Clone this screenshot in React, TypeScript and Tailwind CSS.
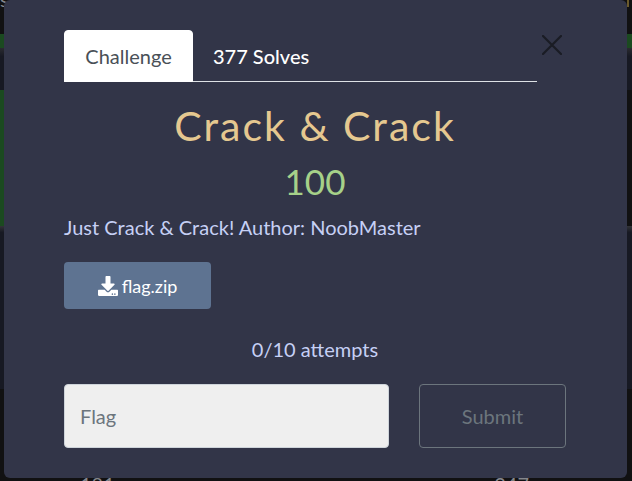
import React from "react";
import { FaDownload } from "react-icons/fa";

function Board() {
  return (
    <div aria-hidden="true" className="flex h-full flex-col text-xl text-[#85878c]">
      <div className="flex h-[34px] justify-between overflow-hidden">
        <span className="-mt-[15px]">s</span>
        <span className="h-[7px] w-[5px] border-l-2 border-[#6b5a2c]" />
      </div>
      <div className="h-[14px] bg-[#1b4a20]" />
      <div className="h-[42px] bg-linear-to-b from-[#2a2b30] to-[#171923] to-20%" />
      <div className="flex h-[136px]">
        <div className="w-1/2 bg-[#1b4a20]" />
      </div>
      <div className="h-[163px] bg-linear-to-b from-[#333438] to-[#171923] to-4%" />
      <div className="flex h-[92px] justify-between overflow-hidden pt-[83px] pr-[103px] pl-20 leading-[24px]">
        <span>181</span>
        <span>347</span>
      </div>
    </div>
  );
}

function ChallengeDialog() {
  return (
    <div
      role="dialog"
      aria-label="Crack & Crack"
      className="absolute inset-x-0 top-0 mr-[5px] ml-1 rounded-md bg-[#323548] pt-[30px] pr-[61px] pb-[30px] pl-[60px] text-xl text-[#c6d0f5]"
    >
      <div className="flex">
        <div role="tablist" className="flex flex-1 border-b border-[#dee2e6]">
          <button role="tab" aria-selected="true" className="-mb-px h-[52px] w-[129px] rounded-t border border-white bg-white text-[#495057]">
            Challenge
          </button>
          <button role="tab" aria-selected="false" className="h-[51px] px-5 pt-1 pb-1 font-medium text-white">
            377 Solves
          </button>
        </div>
        <button aria-label="Close" className="flex h-[30px] w-[29px] items-center justify-center text-[#1a1c24]">
          <svg viewBox="0 0 20 20" className="h-5 w-5" fill="none" stroke="currentColor" strokeWidth="2.2" strokeLinecap="round">
            <path d="M1 1 19 19M19 1 1 19" />
          </svg>
        </button>
      </div>

      <h2 className="mt-5 text-center text-[41px] leading-[48px] tracking-[2px] text-[#e5c890]">Crack &amp; Crack</h2>
      <h3 className="mt-2 text-center text-[35px] leading-[46px] text-[#a6d189]">100</h3>
      <p className="mt-2 leading-[30px]">Just Crack &amp; Crack! Author: NoobMaster</p>

      <a href="#flag" className="mt-5 flex h-[47px] w-[147px] items-center justify-center gap-1 rounded bg-[#5e7391] text-lg text-white">
        <FaDownload className="h-5 w-5" />
        flag.zip
      </a>

      <p className="mt-[25px] text-center leading-[30px]">0/10 attempts</p>

      <form className="mt-5 flex gap-[30px]">
        <input
          aria-label="Flag"
          placeholder="Flag"
          className="h-16 min-w-0 flex-1 rounded border border-[#ced4da] bg-[#efefef] px-[15px] text-[#495057] placeholder:text-[#6c757d]"
        />
        <button type="button" className="h-16 w-[147px] rounded border border-[#6c757d] text-[#6c757d]">
          Submit
        </button>
      </form>
    </div>
  );
}

export default function App() {
  return (
    <main className="relative h-screen overflow-hidden bg-[#111112] font-['Lato',sans-serif]">
      <Board />
      <ChallengeDialog />
    </main>
  );
}
